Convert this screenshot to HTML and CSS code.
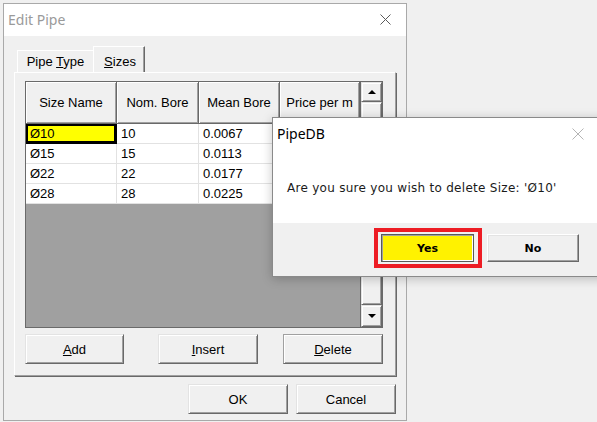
FILE: index.html
```html
<!DOCTYPE html>
<html>
<head>
<meta charset="utf-8">
<link rel="stylesheet" href="styles.css">
</head>
<body>
<div class="win">
  <div class="titlebar">
    <span class="title">Edit Pipe</span>
    <svg class="x" width="11" height="11" viewBox="0 0 11 11"><path d="M0.5 0.5L10.5 10.5M10.5 0.5L0.5 10.5" stroke="#5a5a5a" stroke-width="1"/></svg>
  </div>
  <div class="content">
    <div class="tabs">
      <div class="tab pt"><span>Pipe <u>T</u>ype</span></div>
      <div class="tab active"><span><u>S</u>izes</span></div>
    </div>
    <div class="panel">
      <div class="gridwrap">
        <div class="cols">
          <div class="hd">Size Name</div>
          <div class="hd">Nom. Bore</div>
          <div class="hd">Mean Bore</div>
          <div class="hd">Price per m</div>

          <div class="cell sel">Ø10</div><div class="cell">10</div><div class="cell">0.0067</div><div class="cell"></div>
          <div class="cell">Ø15</div><div class="cell">15</div><div class="cell">0.0113</div><div class="cell"></div>
          <div class="cell">Ø22</div><div class="cell">22</div><div class="cell">0.0177</div><div class="cell"></div>
          <div class="cell">Ø28</div><div class="cell">28</div><div class="cell">0.0225</div><div class="cell"></div>
        </div>
        <div class="vscroll">
          <div class="sbtn up"><span class="tri-up"></span></div>
          <div class="thumb"></div>
          <div class="sbtn down"><span class="tri-down"></span></div>
        </div>
      </div>
      <div class="btnrow">
        <div class="btn w99"><span><u>A</u>dd</span></div>
        <div class="btn w100 insert"><span><u>I</u>nsert</span></div>
        <div class="btn w100 delete"><span><u>D</u>elete</span></div>
      </div>
    </div>
    <div class="footer">
      <div class="btn w100">OK</div>
      <div class="btn w100">Cancel</div>
    </div>
  </div>
</div>

<div class="msgbox">
  <div class="mb-top">
    <div class="mb-title">
      <span class="mb-name">PipeDB</span>
      <svg class="mb-x" width="12" height="12" viewBox="0 0 12 12"><path d="M0.5 0.5L11.5 11.5M11.5 0.5L0.5 11.5" stroke="#b4b4b4" stroke-width="1"/></svg>
    </div>
    <div class="mb-msg">Are you sure you wish to delete Size: 'Ø10'</div>
  </div>
  <div class="mb-bottom">
    <div class="redframe"><div class="mbtn yes">Yes</div></div>
    <div class="mbtn no">No</div>
  </div>
</div>
</body>
</html>
```
FILE: styles.css
```css
* { box-sizing: border-box; }

body {
  margin: 0;
  width: 597px;
  height: 422px;
  overflow: hidden;
  position: relative;
  background: #f0f0f0;
  font-family: "Liberation Sans", Arial, sans-serif;
  font-size: 13px;
  color: #000;
}

.win {
  margin: 3px 0 0 3px;
  width: 404px;
  height: 418px;
  border: 1px solid #a9a9a9;
  background: #f0f0f0;
  display: flex;
  flex-direction: column;
}

.titlebar {
  height: 32px;
  flex: none;
  background: #fff;
  display: flex;
  align-items: center;
  justify-content: space-between;
  padding: 0 15px 0 4px;
}

.title {
  font-family: "Noto Sans", sans-serif;
  font-size: 14px;
  color: #9a9a9a;
  margin-top: -1px;
}

.x { display: block; margin-top: -1px; }

.content {
  padding: 10px 10px 0 10px;
}

.tabs {
  display: flex;
  align-items: flex-end;
  height: 26px;
  padding-left: 3px;
}

.tab {
  height: 22px;
  border-top: 1px solid #fff;
  border-left: 1px solid #fff;
  display: flex;
  align-items: flex-end;
  justify-content: center;
  padding-bottom: 3px;
  line-height: 15px;
  white-space: nowrap;
}

.tab.pt { width: 76px; }

.tab.active {
  width: 52px;
  height: 26px;
  border-right: 1px solid #696969;
  box-shadow: inset -1px 0 0 #a0a0a0;
  padding-left: 2px;
}

.panel {
  width: 382px;
  height: 304px;
  border-top: 1px solid #fff;
  border-left: 1px solid #fff;
  border-right: 1px solid #a0a0a0;
  border-bottom: 1px solid #a0a0a0;
  box-shadow: 1px 1px 0 #696969;
  padding: 8px 0 0 10px;
}

.gridwrap {
  width: 358px;
  height: 247px;
  border: 1px solid #6a6a6a;
  display: flex;
}

.cols {
  width: 334px;
  display: grid;
  grid-template-columns: 91px 82px 81px 80px;
  grid-template-rows: 42px repeat(4, 20px);
  align-content: start;
  background: #a0a0a0;
}

.hd {
  background: #f0f0f0;
  border-right: 1px solid #696969;
  border-bottom: 1px solid #696969;
  box-shadow: inset 1px 1px 0 #fff, inset -1px -1px 0 #a0a0a0;
  display: flex;
  align-items: center;
  justify-content: center;
  padding-bottom: 1px;
}

.cell {
  background: #fff;
  border-right: 1px solid #e2e2e2;
  border-bottom: 1px solid #e2e2e2;
  padding-left: 4px;
  line-height: 19px;
  white-space: nowrap;
  overflow: hidden;
}

.cell.sel {
  background: #ffff00;
  box-shadow: inset 0 0 0 2px #000;
  border-color: #000;
}

.vscroll {
  width: 22px;
  display: flex;
  flex-direction: column;
  border-left: 1px solid #696969;
}

.sbtn, .thumb {
  background: #f0f0f0;
  border-top: 1px solid #e3e3e3;
  border-left: 1px solid #e3e3e3;
  border-right: 1px solid #696969;
  border-bottom: 1px solid #696969;
  box-shadow: inset 1px 1px 0 #fff, inset -1px -1px 0 #a0a0a0;
}

.sbtn {
  height: 20px;
  display: flex;
  align-items: center;
  justify-content: center;
}

.sbtn.down { height: 22px; }

.thumb { flex: 1; }

.tri-up {
  width: 0;
  height: 0;
  border-left: 4px solid transparent;
  border-right: 4px solid transparent;
  border-bottom: 4px solid #000;
}

.tri-down {
  width: 0;
  height: 0;
  border-left: 4px solid transparent;
  border-right: 4px solid transparent;
  border-top: 4px solid #000;
}

.btnrow {
  display: flex;
  margin-top: 6px;
}

.btn {
  height: 30px;
  background: #f0f0f0;
  border-top: 1px solid #e3e3e3;
  border-left: 1px solid #e3e3e3;
  border-right: 1px solid #696969;
  border-bottom: 1px solid #696969;
  box-shadow: inset 1px 1px 0 #fff, inset -1px -1px 0 #a0a0a0;
  display: flex;
  align-items: center;
  justify-content: center;
  white-space: nowrap;
}

.w99 { width: 99px; }
.w100 { width: 100px; }
.insert { margin-left: 34px; }
.delete {
  margin-left: 25px;
  border-top-color: #a0a0a0;
  border-left-color: #a0a0a0;
}

.footer {
  display: flex;
  justify-content: flex-end;
  gap: 8px;
  margin-top: 8px;
}

.msgbox {
  position: absolute;
  left: 272px;
  top: 117px;
  width: 340px;
  height: 160px;
  border: 1px solid #8a8a8a;
  background: #f0f0f0;
  box-shadow: 0 2px 10px rgba(0, 0, 0, 0.22);
  display: flex;
  flex-direction: column;
}

.mb-top {
  height: 105px;
  background: #fff;
}

.mb-title {
  height: 28px;
  display: flex;
  align-items: center;
  justify-content: space-between;
  padding: 0 27px 0 4px;
}

.mb-name {
  font-family: "Noto Sans", sans-serif;
  font-size: 14px;
  color: #000;
  margin-top: 2px;
}

.mb-x { display: block; margin-top: 4px; }

.mb-msg {
  margin-top: 34px;
  padding-left: 14px;
  font-family: "DejaVu Sans", sans-serif;
  font-size: 12px;
  letter-spacing: 0.28px;
  line-height: 16px;
  color: #1a1a1a;
}

.mb-bottom {
  flex: 1;
  display: flex;
  align-items: flex-start;
  padding: 5px 0 0 101px;
}

.redframe {
  width: 108px;
  height: 40px;
  border: 4px solid #ed1c24;
  padding: 2px 4px 2px 3px;
}

.mbtn {
  height: 28px;
  display: flex;
  align-items: center;
  justify-content: center;
  font-family: "DejaVu Sans", sans-serif;
  font-weight: bold;
  font-size: 11px;
}

.yes {
  width: 93px;
  background: #fff200;
  border: 1px solid #5a5a5a;
  box-shadow: inset 1px 1px 0 #a0a0a0, inset -1px -1px 0 #fff;
}

.no {
  width: 92px;
  margin: 6px 0 0 5px;
  background: #f0f0f0;
  border-top: 1px solid #fff;
  border-left: 1px solid #fff;
  border-right: 1px solid #696969;
  border-bottom: 1px solid #696969;
  box-shadow: inset -1px -1px 0 #a0a0a0, inset 1px 1px 0 #e3e3e3;
}
```
